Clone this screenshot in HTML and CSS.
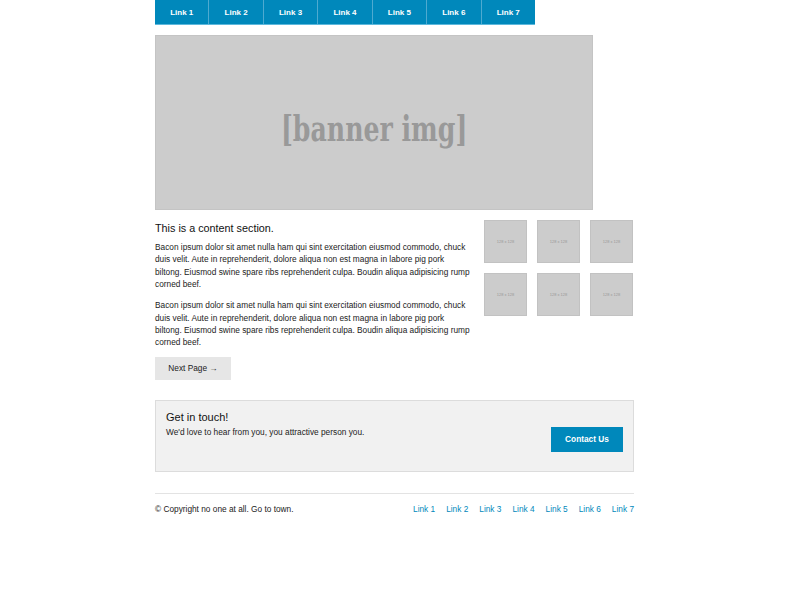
FILE: index.html
```html
<!DOCTYPE html>
<html>
<head>
<meta charset="utf-8">
<link rel="stylesheet" href="styles.css">
</head>
<body>
<div class="page">
  <nav class="topnav">
    <a href="#">Link 1</a>
    <a href="#">Link 2</a>
    <a href="#">Link 3</a>
    <a href="#">Link 4</a>
    <a href="#">Link 5</a>
    <a href="#">Link 6</a>
    <a href="#">Link 7</a>
  </nav>
  <div class="banner"><span class="banner-text">[banner img]</span></div>
  <div class="content">
    <div class="main">
      <h2 class="title">This is a content section.</h2>
      <p>Bacon ipsum dolor sit amet nulla ham qui sint exercitation eiusmod commodo, chuck duis velit. Aute in reprehenderit, dolore aliqua non est magna in labore pig pork biltong. Eiusmod swine spare ribs reprehenderit culpa. Boudin aliqua adipisicing rump corned beef.</p>
      <p>Bacon ipsum dolor sit amet nulla ham qui sint exercitation eiusmod commodo, chuck duis velit. Aute in reprehenderit, dolore aliqua non est magna in labore pig pork biltong. Eiusmod swine spare ribs reprehenderit culpa. Boudin aliqua adipisicing rump corned beef.</p>
      <a class="btn-next" href="#">Next Page →</a>
    </div>
    <div class="thumbs">
      <div class="thumb">128 x 128</div>
      <div class="thumb">128 x 128</div>
      <div class="thumb">128 x 128</div>
      <div class="thumb">128 x 128</div>
      <div class="thumb">128 x 128</div>
      <div class="thumb">128 x 128</div>
    </div>
  </div>
  <div class="cta">
    <div class="cta-text">
      <h3>Get in touch!</h3>
      <p>We'd love to hear from you, you attractive person you.</p>
    </div>
    <a class="btn-contact" href="#">Contact Us</a>
  </div>
  <footer class="footer">
    <span class="copy">© Copyright no one at all. Go to town.</span>
    <nav class="footnav">
      <a href="#">Link 1</a>
      <a href="#">Link 2</a>
      <a href="#">Link 3</a>
      <a href="#">Link 4</a>
      <a href="#">Link 5</a>
      <a href="#">Link 6</a>
      <a href="#">Link 7</a>
    </nav>
  </footer>
</div>
</body>
</html>
```
FILE: styles.css
```css
html, body {
  margin: 0;
  padding: 0;
  background: #fff;
}
body {
  font-family: "Liberation Sans", Arial, sans-serif;
  color: #222;
  font-size: 8.3px;
}
.page {
  width: 479px;
  margin-left: 155px;
}
.topnav {
  display: flex;
  width: 380px;
  height: 25px;
  background: #0088bb;
  border-bottom: 1px solid #5db8dc;
  box-sizing: border-box;
}
.topnav a {
  flex: 1;
  display: flex;
  align-items: center;
  justify-content: center;
  color: #fff;
  text-decoration: none;
  font-weight: bold;
  font-size: 8px;
  border-left: 1px solid #4eaad0;
}
.topnav a:first-child {
  border-left: none;
}
.banner {
  margin-top: 10px;
  width: 438px;
  height: 175px;
  background: #cccccc;
  border: 1px solid #c4c4c4;
  box-sizing: border-box;
  display: flex;
  align-items: center;
  justify-content: center;
  color: #999;
  font-family: "DejaVu Serif", serif;
  font-weight: bold;
  font-size: 36px;
  padding-top: 10px;
}
.banner-text {
  display: inline-block;
  transform: scaleX(0.7);
}
.content {
  display: flex;
  justify-content: space-between;
  margin-top: 10px;
}
.main {
  width: 316px;
}
.title {
  margin: 1px 0 6px;
  font-size: 10.8px;
  font-weight: normal;
  color: #111;
  line-height: 14px;
}
.main p {
  margin: 0 0 8.6px;
  line-height: 12.4px;
  font-size: 8.3px;
}
.btn-next {
  display: block;
  width: 76px;
  height: 23px;
  line-height: 23px;
  text-align: center;
  background: #e6e6e6;
  color: #222;
  text-decoration: none;
  font-size: 8.3px;
}
.thumbs {
  width: 150px;
  display: grid;
  grid-template-columns: repeat(3, 43px);
  grid-auto-rows: 43px;
  column-gap: 10px;
  row-gap: 10px;
  align-content: start;
}
.thumb {
  background: #cccccc;
  border: 1px solid #c2c2c2;
  box-sizing: border-box;
  color: #999;
  font-size: 4px;
  display: flex;
  align-items: center;
  justify-content: center;
}
.cta {
  margin-top: 20px;
  height: 72px;
  box-sizing: border-box;
  background: #f1f1f1;
  border: 1px solid #dcdcdc;
  display: flex;
  justify-content: space-between;
  align-items: flex-start;
  padding: 10px 10px 0 10px;
}
.cta h3 {
  margin: 0;
  font-size: 11px;
  font-weight: normal;
  color: #111;
  line-height: 12px;
}
.cta p {
  margin: 4px 0 0;
  font-size: 8.3px;
  line-height: 10px;
}
.btn-contact {
  margin-top: 16px;
  width: 72px;
  height: 25px;
  line-height: 25px;
  text-align: center;
  background: #0088bb;
  color: #fff;
  text-decoration: none;
  font-size: 8.3px;
  font-weight: bold;
}
.footer {
  margin-top: 21px;
  border-top: 1px solid #e3e3e3;
  display: flex;
  justify-content: space-between;
  align-items: center;
  padding-top: 10px;
  font-size: 8.3px;
}
.footnav {
  display: flex;
  gap: 11px;
}
.footnav a {
  color: #0088bb;
  text-decoration: none;
}
```
